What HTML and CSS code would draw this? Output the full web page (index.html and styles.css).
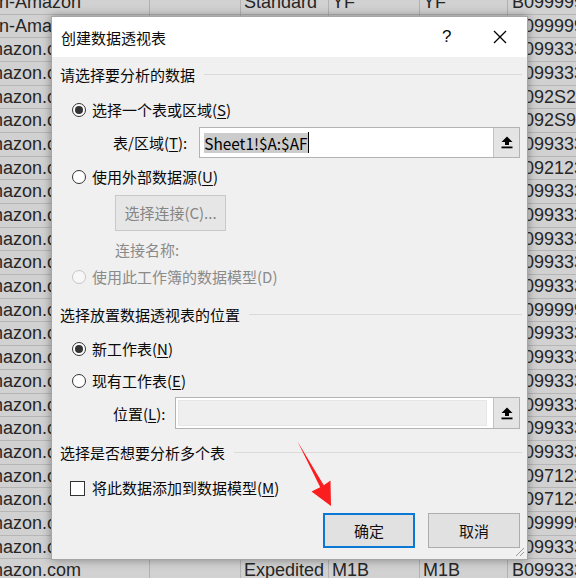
FILE: index.html
```html
<!DOCTYPE html>
<html lang="zh-CN">
<head>
<meta charset="utf-8">
<title>创建数据透视表</title>
<link rel="stylesheet" href="styles.css">
</head>
<body>
<div class="sheet">
  <div class="c">Non-Amazon</div><div class="c"></div><div class="c">Standard</div><div class="c">YF</div><div class="c">YF</div><div class="c">B099999</div>
  <div class="c">Non-Amazon</div><div class="c"></div><div class="c">Standard</div><div class="c">YF</div><div class="c">YF</div><div class="c">B099999</div>
  <div class="c">Amazon.com</div><div class="c"></div><div class="c">Standard</div><div class="c">YF</div><div class="c">YF</div><div class="c">B099333</div>
  <div class="c">Amazon.com</div><div class="c"></div><div class="c">Standard</div><div class="c">YF</div><div class="c">YF</div><div class="c">B099333</div>
  <div class="c">Amazon.com</div><div class="c"></div><div class="c">Standard</div><div class="c">YF</div><div class="c">YF</div><div class="c">B092S23</div>
  <div class="c">Amazon.com</div><div class="c"></div><div class="c">Standard</div><div class="c">YF</div><div class="c">YF</div><div class="c">B092S93</div>
  <div class="c">Amazon.com</div><div class="c"></div><div class="c">Standard</div><div class="c">YF</div><div class="c">YF</div><div class="c">B099333</div>
  <div class="c">Amazon.com</div><div class="c"></div><div class="c">Standard</div><div class="c">YF</div><div class="c">YF</div><div class="c">B092123</div>
  <div class="c">Amazon.com</div><div class="c"></div><div class="c">Standard</div><div class="c">YF</div><div class="c">YF</div><div class="c">B099333</div>
  <div class="c">Amazon.com</div><div class="c"></div><div class="c">Standard</div><div class="c">YF</div><div class="c">YF</div><div class="c">B099333</div>
  <div class="c">Amazon.com</div><div class="c"></div><div class="c">Standard</div><div class="c">YF</div><div class="c">YF</div><div class="c">B099333</div>
  <div class="c">Amazon.com</div><div class="c"></div><div class="c">Standard</div><div class="c">YF</div><div class="c">YF</div><div class="c">B099333</div>
  <div class="c">Amazon.com</div><div class="c"></div><div class="c">Standard</div><div class="c">YF</div><div class="c">YF</div><div class="c">B099333</div>
  <div class="c">Amazon.com</div><div class="c"></div><div class="c">Standard</div><div class="c">YF</div><div class="c">YF</div><div class="c">B099999</div>
  <div class="c">Amazon.com</div><div class="c"></div><div class="c">Standard</div><div class="c">YF</div><div class="c">YF</div><div class="c">B099333</div>
  <div class="c">Amazon.com</div><div class="c"></div><div class="c">Standard</div><div class="c">YF</div><div class="c">YF</div><div class="c">B099333</div>
  <div class="c">Amazon.com</div><div class="c"></div><div class="c">Standard</div><div class="c">YF</div><div class="c">YF</div><div class="c">B099333</div>
  <div class="c">Amazon.com</div><div class="c"></div><div class="c">Standard</div><div class="c">YF</div><div class="c">YF</div><div class="c">B099333</div>
  <div class="c">Amazon.com</div><div class="c"></div><div class="c">Standard</div><div class="c">YF</div><div class="c">YF</div><div class="c">B099333</div>
  <div class="c">Amazon.com</div><div class="c"></div><div class="c">Standard</div><div class="c">YF</div><div class="c">YF</div><div class="c">B099333</div>
  <div class="c">Amazon.com</div><div class="c"></div><div class="c">Standard</div><div class="c">YF</div><div class="c">YF</div><div class="c">B097123</div>
  <div class="c">Amazon.com</div><div class="c"></div><div class="c">Standard</div><div class="c">YF</div><div class="c">YF</div><div class="c">B097123</div>
  <div class="c">Amazon.com</div><div class="c"></div><div class="c">Standard</div><div class="c">YF</div><div class="c">YF</div><div class="c">B099999</div>
  <div class="c">Amazon.com</div><div class="c"></div><div class="c">Standard</div><div class="c">YF</div><div class="c">YF</div><div class="c">B099333</div>
  <div class="c">Amazon.com</div><div class="c"></div><div class="c">Expedited</div><div class="c">M1B</div><div class="c">M1B</div><div class="c">B099333</div>
</div>

<div class="dialog">
  <div class="titlebar">
    <span class="title">创建数据透视表</span>
    <span class="help">?</span>
    <svg class="close" width="14" height="14" viewBox="0 0 14 14"><path d="M1 1 L13 13 M13 1 L1 13" stroke="#000" stroke-width="1.3" fill="none"/></svg>
  </div>
  <div class="body">
    <div class="legend r-h1"><span>请选择要分析的数据</span></div>
    <div class="opt r-radio1"><span class="radio checked"></span><span>选择一个表或区域(<u>S</u>)</span></div>
    <div class="field r-table">
      <span class="flabel">表/区域(<u>T</u>):</span>
      <div class="input">
        <div class="text"><span class="sel">Sheet1!$A:$AF</span><span class="caret"></span></div>
        <div class="pick"><svg width="12" height="13" viewBox="0 0 12 13"><path d="M6 0.5 L11.5 6 H8 V9 H4 V6 H0.5 Z" fill="#000"/><rect x="0.5" y="10.5" width="11" height="1.8" fill="#000"/></svg></div>
      </div>
    </div>
    <div class="opt r-radio2"><span class="radio"></span><span>使用外部数据源(<u>U</u>)</span></div>
    <div class="indent r-conn"><span class="btn-dis">选择连接(C)...</span></div>
    <div class="indent dis r-name">连接名称:</div>
    <div class="opt dis r-radio3"><span class="radio off"></span><span>使用此工作簿的数据模型(D)</span></div>
    <div class="legend r-h2"><span>选择放置数据透视表的位置</span></div>
    <div class="opt r-radio4"><span class="radio checked"></span><span>新工作表(<u>N</u>)</span></div>
    <div class="opt r-radio5"><span class="radio"></span><span>现有工作表(<u>E</u>)</span></div>
    <div class="field r-loc">
      <span class="flabel">位置(<u>L</u>):</span>
      <div class="input loc">
        <div class="text"><div class="inner"></div></div>
        <div class="pick"><svg width="12" height="13" viewBox="0 0 12 13"><path d="M6 0.5 L11.5 6 H8 V9 H4 V6 H0.5 Z" fill="#000"/><rect x="0.5" y="10.5" width="11" height="1.8" fill="#000"/></svg></div>
      </div>
    </div>
    <div class="legend r-h3"><span>选择是否想要分析多个表</span></div>
    <div class="opt r-check"><span class="check"></span><span>将此数据添加到数据模型(<u>M</u>)</span></div>
    <div class="actions">
      <button class="btn primary">确定</button>
      <button class="btn">取消</button>
    </div>
  </div>
  <svg class="grip" width="12" height="12" viewBox="0 0 12 12"><path d="M11 3 L3 11 M11 7 L7 11" stroke="#9a9a9a" stroke-width="1" fill="none"/></svg>
</div>

<svg class="arrow" width="576" height="578" viewBox="0 0 576 578">
  <polygon points="297.5,441.5 323.8,485.2 330.5,480.5 331,506 311.5,491.5 320.2,487.2" fill="#fa1e1e"/>
</svg>
</body>
</html>
```

FILE: styles.css
```css
html, body {
  margin: 0;
  padding: 0;
}
body {
  width: 576px;
  height: 578px;
  overflow: hidden;
  position: relative;
  background: #d3d3d3;
  font-family: "Liberation Sans", Arial, sans-serif;
}

/* background spreadsheet */
.sheet {
  display: grid;
  grid-template-columns: 176px 91px 88px 91px 88px 68px;
  grid-auto-rows: 23.7px;
  margin-left: -26px;
  margin-top: -9.2px;
}
.c {
  box-sizing: border-box;
  background: #d1d1d1;
  border-right: 1px solid #b2b2b2;
  border-bottom: 1px solid #b6b6b6;
  font-size: 18px;
  line-height: 22.7px;
  color: #262626;
  padding-left: 3px;
  white-space: nowrap;
  overflow: hidden;
}
.c:nth-child(6n+1) { padding-left: 2px; }
.c:nth-child(6n) { padding-left: 4px; border-right: 0; }

/* dialog */
.dialog {
  position: absolute;
  left: 51px;
  top: 16px;
  width: 477px;
  height: 544px;
  box-sizing: border-box;
  border: 1px solid #a6a6a6;
  background: #f0f0f0;
  box-shadow: 0 0 9px rgba(0, 0, 0, 0.38);
  font-family: "Noto Sans CJK SC", "Microsoft YaHei", sans-serif;
  font-size: 15px;
  color: #0a0a0a;
  display: flex;
  flex-direction: column;
}
.titlebar {
  height: 40px;
  background: #fff;
  display: flex;
  align-items: center;
  padding-left: 9px;
  flex: none;
}
.title {
  flex: 1;
  line-height: 20px;
  margin-top: 1px;
}
.help {
  font-family: "Liberation Sans", Arial, sans-serif;
  font-size: 17px;
  width: 12px;
  margin-right: 39px;
  line-height: 20px;
}
.close {
  margin-right: 20px;
}

.body {
  padding: 7px 7px 0 8px;
  display: flex;
  flex-direction: column;
}
.legend, .opt, .indent {
  height: 22px;
  line-height: 22px;
  display: flex;
  align-items: center;
  white-space: nowrap;
}
.legend {
  margin-right: -2px;
}
.legend::after {
  content: "";
  flex: 1;
  height: 1px;
  background: #dadada;
  margin-left: 9px;
  margin-top: -1px;
}
.opt {
  padding-left: 12px;
}
.radio {
  width: 14px;
  height: 14px;
  box-sizing: border-box;
  border: 1px solid #333;
  border-radius: 50%;
  background: #fff;
  margin-right: 6px;
  display: flex;
  align-items: center;
  justify-content: center;
  flex: none;
}
.radio.checked::after {
  content: "";
  width: 8px;
  height: 8px;
  border-radius: 50%;
  background: #333;
}
.radio.off {
  border-color: #c6c6c6;
  background: #f7f7f7;
}
.check {
  width: 15px;
  height: 15px;
  box-sizing: border-box;
  border: 1px solid #333;
  background: #fff;
  margin-left: -2px;
  margin-right: 7px;
  flex: none;
}
.dis { color: #8a8a8a; }
u { text-underline-offset: 2px; }

.field {
  display: flex;
  align-items: center;
  padding-left: 53px;
}
.flabel {
  flex: none;
}
.input {
  flex: 1;
  display: flex;
  box-sizing: border-box;
  border: 1px solid #b3b3b3;
  background: #fff;
}
.r-table .input {
  margin-left: 12px;
  height: 31px;
}
.r-loc .input {
  margin-left: 10px;
  height: 32px;
}
.input .text {
  flex: 1;
  display: flex;
  align-items: center;
  padding-left: 4px;
}
.sel {
  background: #cccccc;
  line-height: 20px;
  font-size: 15.4px;
  color: #000;
}
.caret {
  width: 1px;
  height: 21px;
  background: #000;
}
.input.loc .text {
  padding: 2px 6px 2px 2px;
}
.input.loc .inner {
  flex: 1;
  align-self: stretch;
  background: #efefef;
  border: 1px solid #e6e6e6;
}
.pick {
  width: 25px;
  flex: none;
  background: #e4e4e4;
  border-left: 1px solid #c2c2c2;
  display: flex;
  align-items: center;
  justify-content: center;
}

.r-radio1 { margin-top: 13px; }
.r-table { margin-top: 6px; }
.r-radio2 { margin-top: 8px; }
.r-conn { margin-top: 7px; height: 36px; padding-left: 55px; }
.btn-dis {
  box-sizing: border-box;
  height: 36px;
  width: 111px;
  border: 1px solid #c9c9c9;
  background: #e6e6e6;
  color: #858585;
  display: flex;
  align-items: center;
  justify-content: center;
}
.r-name { margin-top: 8px; padding-left: 55px; }
.r-radio3 { margin-top: 5px; }
.r-h2 { margin-top: 16px; }
.r-radio4 { margin-top: 12px; }
.r-radio5 { margin-top: 10px; }
.r-loc { margin-top: 5px; }
.r-h3 { margin-top: 13px; }
.r-check { margin-top: 13px; }

.actions {
  margin-top: 14px;
  display: flex;
  justify-content: flex-end;
  gap: 13px;
}
.btn {
  width: 92px;
  height: 35px;
  box-sizing: border-box;
  border: 1px solid #adadad;
  background: #e1e1e1;
  font-family: "Noto Sans CJK SC", "Microsoft YaHei", sans-serif;
  font-size: 15px;
  color: #111;
  padding: 0;
}
.btn.primary {
  border: 2px solid #0a78d4;
}
.grip {
  position: absolute;
  right: 2px;
  bottom: 2px;
}

.arrow {
  position: absolute;
  left: 0;
  top: 0;
  pointer-events: none;
}
```
